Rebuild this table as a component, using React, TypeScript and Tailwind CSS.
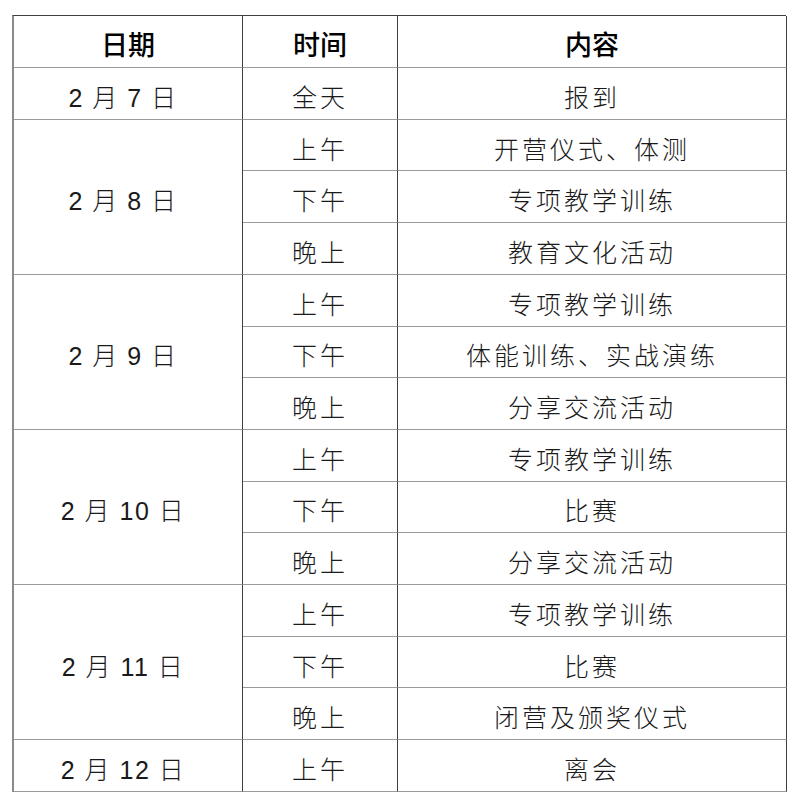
import React from "react";

type Day = { date: string; items: [string, string][] };

const days: Day[] = [
  { date: "2 月 7 日", items: [["全天", "报到"]] },
  {
    date: "2 月 8 日",
    items: [
      ["上午", "开营仪式、体测"],
      ["下午", "专项教学训练"],
      ["晚上", "教育文化活动"],
    ],
  },
  {
    date: "2 月 9 日",
    items: [
      ["上午", "专项教学训练"],
      ["下午", "体能训练、实战演练"],
      ["晚上", "分享交流活动"],
    ],
  },
  {
    date: "2 月 10 日",
    items: [
      ["上午", "专项教学训练"],
      ["下午", "比赛"],
      ["晚上", "分享交流活动"],
    ],
  },
  {
    date: "2 月 11 日",
    items: [
      ["上午", "专项教学训练"],
      ["下午", "比赛"],
      ["晚上", "闭营及颁奖仪式"],
    ],
  },
  { date: "2 月 12 日", items: [["上午", "离会"]] },
];

const cell =
  "flex items-center justify-center border-r border-r-[#3f3f3f] border-b border-b-[#9a9a9a] pt-[10px]";
const body =
  "font-['Liberation_Sans','Noto_Sans_CJK_SC',sans-serif] font-light text-[25px] text-[#1a1a1a] leading-none";

export default function App() {
  return (
    <div className="w-[799px] h-[805px] bg-white pt-[15px] pl-[12px]">
      <div className="grid grid-cols-[229px_155px_389px] grid-rows-[52px_repeat(14,51.71px)] w-[774px] border-l-2 border-l-[#8a8a8a] border-t border-t-[#3f3f3f]">
        {["日期", "时间", "内容"].map((h) => (
          <div
            key={h}
            className="flex items-center justify-center border-r border-r-[#3f3f3f] border-b border-b-[#9a9a9a] pt-[4px] font-['Noto_Sans_CJK_SC',sans-serif] font-medium text-[27px] leading-none text-black"
          >
            {h}
          </div>
        ))}
        {days.map((d) => (
          <React.Fragment key={d.date}>
            <div
              className={`${cell} ${body} tracking-[1.5px] pr-[10px] ${
                d.items.length === 3 ? "row-span-3" : "row-span-1"
              }`}
            >
              {d.date}
            </div>
            {d.items.map(([t, c], i) => (
              <div key={i} className="contents">
                <div className={`${cell} ${body} tracking-[3px] col-start-2`}>{t}</div>
                <div className={`${cell} ${body} tracking-[3px] col-start-3`}>{c}</div>
              </div>
            ))}
          </React.Fragment>
        ))}
      </div>
    </div>
  );
}
